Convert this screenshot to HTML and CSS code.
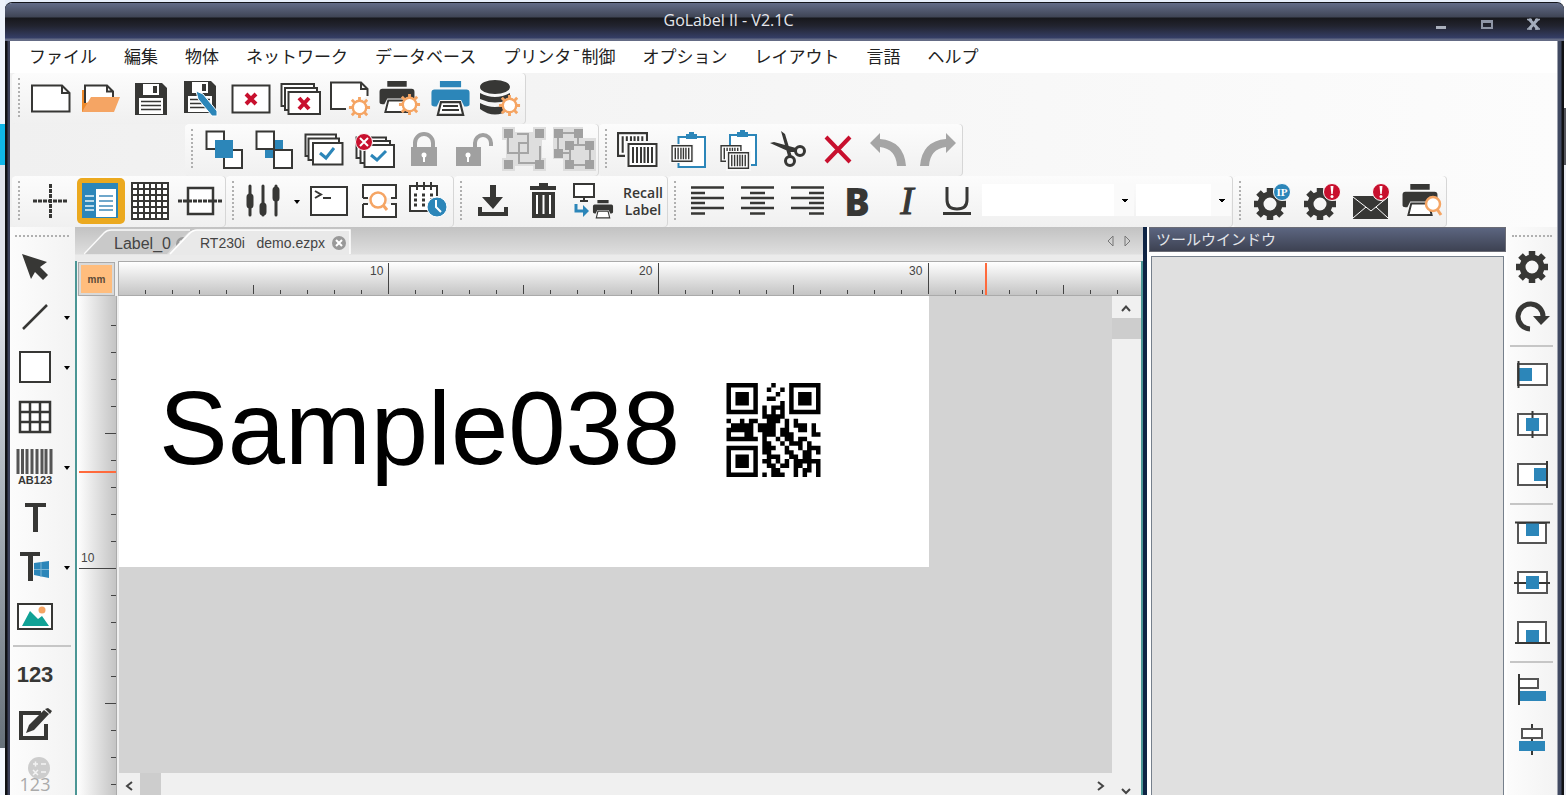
FILE: index.html
```html
<!DOCTYPE html>
<html lang="ja">
<head>
<meta charset="utf-8">
<title>GoLabel II - V2.1C</title>
<link rel="stylesheet" href="styles.css">
</head>
<body>
<svg class="defs" aria-hidden="true">
  <defs>
    <symbol id="cog" viewBox="-18 -18 36 36">
      <circle r="9.5" fill="none" stroke="currentColor" stroke-width="6"/>
      <g stroke="currentColor" stroke-width="6.5">
        <path d="M0-10V-16M0 10V16M-10 0H-16M10 0H16M-7-7L-11.5-11.5M7 7L11.5 11.5M-7 7L-11.5 11.5M7-7L11.5-11.5"/>
      </g>
    </symbol>
    <symbol id="sun" viewBox="-12 -12 24 24">
      <circle r="7" fill="#fff" stroke="#f5a564" stroke-width="2.5"/>
      <path d="M0-7V-11M0 7V11M-7 0H-11M7 0H11M-5-5L-8-8M5 5L8 8M-5 5L-8 8M5-5L8-8" stroke="#f5a564" stroke-width="3"/>
    </symbol>
    <symbol id="floppy" viewBox="0 0 32 32">
      <path d="M0 0H27L32 5V32H0z" fill="#373735"/>
      <path d="M8 1H24V12H8z" fill="#fff"/><path d="M18 3H22V10H18z" fill="#373735"/>
      <path d="M4 15H28V31H4z" fill="#fff"/><path d="M6 18.5H26M6 22.5H26M6 26.5H26" stroke="#373735" stroke-width="1.5"/>
    </symbol>
    <symbol id="printer" viewBox="0 0 36 34">
      <path d="M8 0H28V6H8zM3 8H33Q36 8 36 11V22Q36 24 33 24H31L28 18H8L5 24H3Q0 24 0 22V11Q0 8 3 8z" fill="currentColor"/>
      <path d="M9 20H27L30 32H6z" fill="#fff" stroke="#373735" stroke-width="2"/>
    </symbol>
    <symbol id="bars" viewBox="0 0 30 24">
      <path d="M1 1H29V23H1z" fill="#fff" stroke="#373735" stroke-width="2"/>
      <path d="M5.5 4V20M9.500 4V20M13.500 4V20M17 4V20M20.500 4V20M24.500 4V20" stroke="#373735" stroke-width="2"/>
    </symbol>
    <symbol id="alert" viewBox="0 0 18 18">
      <circle cx="9" cy="9" r="8.500" fill="#c8102e" stroke="#fff"/>
      <path d="M7.500 3H10.500L9.700 11H8.300z" fill="#fff"/><circle cx="9" cy="13.500" r="1.500" fill="#fff"/>
    </symbol>
  </defs>
</svg>

<main class="window">
  <header class="titlebar">
    <h1 class="title">GoLabel II - V2.1C</h1>
    <div class="controls">
      <button class="control" aria-label="最小化"><svg width="46" height="38"><path d="M18 23H28V26H18z" fill="#aab0bc"/></svg></button>
      <button class="control" aria-label="最大化"><svg width="46" height="38"><path d="M18 18H28V25H18z" fill="none" stroke="#8f96a6" stroke-width="2"/><path d="M18 18H28V20H18z" fill="#8f96a6"/></svg></button>
      <button class="control" aria-label="閉じる"><svg width="46" height="38"><path d="M19 16L28 26M28 16L19 26" stroke="#a4adbc" stroke-width="3"/><path d="M17 16.500H22M25 16.500H30M17 26H22M25 26H30" stroke="#a4adbc" stroke-width="1.500"/></svg></button>
    </div>
  </header>

  <nav class="menu">
    <button>ファイル</button><button>編集</button><button>物体</button><button>ネットワーク</button><button>データベース</button><button>プリンタ¯制御</button><button>オプション</button><button>レイアウト</button><button>言語</button><button>ヘルプ</button>
  </nav>

  <div class="bars">
    <div class="bar-row">
      <div class="bar">
        <button class="tool" aria-label="新規"><svg><path class="pg" d="M6 12.500H36L43.500 20V38.500H6zM36 12.500V20H43.500"/></svg></button>
        <button class="tool" aria-label="開く"><svg><path d="M6 17H12V39H6z" fill="#ee8a2c"/><path class="pg" d="M9 30V12.500H31L37 18.500V26M31 12.500V18.500H37"/><path d="M15 24H44L38 39H6z" fill="#f5a564"/></svg></button>
        <button class="tool" aria-label="保存"><svg><use href="#floppy" x="9" y="10" width="32" height="32"/></svg></button>
        <button class="tool" aria-label="名前を付けて保存"><svg><use href="#floppy" x="8" y="8" width="32" height="32"/><path d="M20 18L27 21L41 38V43H36L22 26z" fill="#2c86b9" stroke="#fff"/></svg></button>
        <button class="tool" aria-label="閉じる"><svg><path class="pg" d="M6.500 12.500H43.500V39.500H6.500z"/><path class="red" d="M20 21L30 31M30 21L20 31"/></svg></button>
        <button class="tool" aria-label="すべて閉じる"><svg><path class="pg" d="M5.500 11H38V33H5.500z"/><path class="pg" d="M9 15H41V37H9z"/><path class="pg" d="M12.500 19H44V41H12.500z"/><path class="red" d="M23 25L33 36M33 25L23 36"/></svg></button>
        <button class="tool" aria-label="ラベル設定"><svg><path class="pg" d="M20 36H5V9.500H35L41.500 16V23M35 9.500V16H41.500"/><use href="#sun" x="22" y="23" width="23" height="23"/></svg></button>
        <button class="tool" aria-label="印刷設定"><svg color="#373735"><use href="#printer" x="3" y="8" width="36" height="33"/><use href="#sun" x="22" y="20" width="23" height="23"/></svg></button>
        <button class="tool" aria-label="印刷"><svg color="#2c86b9"><use href="#printer" x="5" y="8" width="39" height="36"/><path class="ln" d="M17 33H32M16 37H33"/></svg></button>
        <button class="tool" aria-label="データベース設定"><svg><ellipse cx="19" cy="14" rx="15" ry="7" fill="#373735"/><path d="M4 20Q19 28 34 20V26Q19 33 4 26zM4 30Q19 38 34 30V36Q19 47 4 36z" fill="#373735"/><use href="#sun" x="22" y="21" width="23" height="23"/></svg></button>
      </div>
    </div>

    <div class="bar-row second">
      <div class="bar">
        <button class="tool" aria-label="前面へ"><svg><path class="pg" d="M7.500 6.500H25V24H7.500zM25 25H43V43H25z"/><path class="blue" d="M16 15H34V33H16z"/></svg></button>
        <button class="tool" aria-label="背面へ"><svg><path class="blue" d="M16 15H34V33H16z"/><path class="pg" d="M7.500 6.500H25V24H7.500zM25 25H43V43H25z"/></svg></button>
        <button class="tool" aria-label="すべて選択"><svg><path class="pg" d="M6.500 9.500H37V31H6.500z"/><path class="pg" d="M9.500 13.500H40V35H9.500z"/><path class="pg" d="M14 18H43.500V39.500H14z"/><path class="tick" d="M21 28L27 33L35 23"/></svg></button>
        <button class="tool" aria-label="選択解除"><svg><path class="pg" d="M7.500 12.500H37V33H7.500z"/><path class="pg" d="M11.500 16H41V38H11.500z"/><path class="pg" d="M15.500 20H45V42H15.500z"/><path class="tick" d="M22 30L28 35L37 26"/><circle cx="15" cy="17" r="8.500" fill="#c8102e" stroke="#fff"/><path d="M11 13L19 21M19 13L11 21" stroke="#fff" stroke-width="2"/></svg></button>
        <button class="tool" aria-label="ロック"><svg><path d="M16 24V18A9 9 0 0 1 34 18V24" fill="none" stroke="#a0a0a0" stroke-width="4"/><path d="M12 22H38V41H12z" fill="#a0a0a0"/><path d="M25 28V37" stroke="#fff" stroke-width="2"/><circle cx="25" cy="30" r="2.500" fill="#fff"/></svg></button>
        <button class="tool" aria-label="ロック解除"><svg><path d="M26 24V18A8 8 0 0 1 42 18V21" fill="none" stroke="#a0a0a0" stroke-width="4"/><path d="M7 22H32V41H7z" fill="#a0a0a0"/><path d="M19 28V37" stroke="#fff" stroke-width="2"/><circle cx="19" cy="30" r="2.500" fill="#fff"/></svg></button>
        <button class="tool" aria-label="グループ化"><svg><path d="M3 2H16V7H34V2H47V15H43V33H47V46H34V41H16V46H3V33H7V15H3z" fill="#dedede"/><path class="gl" d="M9 9V28H29V18H20V38H41V21M18 9H29V28"/><path class="gb" d="M5 4H14V13H5zM36 4H45V13H36zM5 35H14V44H5zM36 35H45V44H36z"/></svg></button>
        <button class="tool" aria-label="グループ解除"><svg><path d="M4 2H34V13H47V46H14V34H4z" fill="#dedede"/><path class="gl" d="M9 8H29V20M9 8V28H20M21 20H41V40H21z"/><path class="gb" d="M5 4H14V13H5zM25 4H34V13H25zM5 24H14V33H5zM16 16H25V25H16zM36 16H45V25H36zM16 35H25V44H16zM36 35H45V44H36z"/></svg></button>
      </div>
      <div class="bar">
        <button class="tool" aria-label="複製"><svg><use href="#bars" x="4" y="7" width="31" height="25"/><path d="M12 16H46V42H12z" fill="#f8f8f8"/><use href="#bars" x="14" y="18" width="31" height="24"/></svg></button>
        <button class="tool" aria-label="コピー"><svg><path d="M15.500 12H42V42H15.500z" fill="#fff" stroke="#2c86b9" stroke-width="2"/><path class="blue" d="M23 9H26V7H31V9H34V14H23z"/><path d="M6 19H31V38H6z" fill="#f8f8f8"/><use href="#bars" x="8" y="20" width="22" height="17"/></svg></button>
        <button class="tool" aria-label="貼り付け"><svg><path d="M17 10H43V40H17z" fill="#fff" stroke="#2c86b9" stroke-width="2"/><path class="blue" d="M24 7H27V5H32V7H35V12H24z"/><use href="#bars" x="7" y="20" width="22" height="17"/><path d="M13 26H38V46H13z" fill="#f8f8f8"/><use href="#bars" x="14" y="27" width="23" height="17"/></svg></button>
        <button class="tool" aria-label="切り取り"><svg><path d="M18 6L22 9L29 32L25 31zM7 18L11 17L33 23L33 27L27 27z" fill="#373735"/><circle cx="37" cy="26" r="4.500" fill="none" stroke="#373735" stroke-width="3"/><circle cx="27" cy="36" r="4.500" fill="none" stroke="#373735" stroke-width="3"/></svg></button>
        <button class="tool" aria-label="削除"><svg><path class="red" d="M13 12L37 37M37 12L13 37"/></svg></button>
        <button class="tool" aria-label="元に戻す"><svg><path d="M7 18L17 8V14Q41 16 43 41H34Q33 24 17 22V28z" fill="#a5a5a5"/></svg></button>
        <button class="tool" aria-label="やり直し"><svg><path d="M43 18L33 8V14Q9 16 7 41H16Q17 24 33 22V28z" fill="#a5a5a5"/></svg></button>
      </div>
    </div>

    <div class="bar-row">
      <div class="bar">
        <button class="tool" aria-label="十字線"><svg><path d="M7 25H42M24.500 8V43" fill="none" stroke="#373735" stroke-width="3" stroke-dasharray="4 1"/></svg></button>
        <button class="tool on" aria-label="プロパティ"><svg><path class="blue" d="M6 7H42V42H6z"/><path d="M20 13H40V41H20z" fill="#fff"/><path d="M9 20H18M9 25H18M9 30H18M9 34H18" stroke="#b9d8e8" stroke-width="2"/><path d="M23 20H37M23 25H37M23 30H37M23 34H37" stroke="#6fa7cb" stroke-width="2"/></svg></button>
        <button class="tool" aria-label="グリッド"><svg><path d="M6 7H42V43H6zM12 7V43M18 7V43M24 7V43M30 7V43M36 7V43M6 13H42M6 19H42M6 25H42M6 31H42M6 37H42" fill="#fff" stroke="#373735" stroke-width="2"/></svg></button>
        <button class="tool" aria-label="中央線"><svg><path d="M12 12H37V38H12z" fill="#fff" stroke="#373735" stroke-width="2.500"/><path d="M2 25H47" stroke="#373735" stroke-width="3" stroke-dasharray="4 1"/></svg></button>
      </div>
      <div class="bar">
        <button class="tool drop" aria-label="調整"><svg><path d="M10 10V39M23 10V39M36 10V39" stroke="#373735" stroke-width="3" stroke-linecap="round"/><path d="M10 21V29M23 30V36M36 14V22" stroke="#373735" stroke-width="7" stroke-linecap="round"/></svg></button>
        <button class="tool" aria-label="コマンド"><svg><path class="pg" d="M7 11H43V39H7z"/><path d="M11 15L17 18.500L11 22M19 22H27" fill="none" stroke="#373735" stroke-width="2"/></svg></button>
        <button class="tool" aria-label="プレビュー"><svg><path class="pg" d="M9 22V9H42V22H37M9 22H14M9 28V41H42V28H37M9 28H14"/><circle cx="24" cy="24" r="7.500" fill="#fff" stroke="#f5a564" stroke-width="2.500"/><path d="M29 29L33 34" stroke="#f5a564" stroke-width="3"/></svg></button>
        <button class="tool" aria-label="予定"><svg><path class="pg" d="M33 20V10H6V35H24M13 6V14M20 6V14M27 6V14"/><path d="M10 19H29M10 24H29M10 29H23" stroke="#373735" stroke-width="3" stroke-dasharray="3 5"/><circle cx="33" cy="31" r="10" fill="#2c86b9" stroke="#fff"/><path d="M32 24V31L37 36" fill="none" stroke="#fff" stroke-width="2"/></svg></button>
      </div>
      <div class="bar">
        <button class="tool" aria-label="ダウンロード"><svg><path d="M22 9H28V21H35L25 33L14 21H22zM10 31H14V36H36V31H40V40H10z" fill="#373735"/></svg></button>
        <button class="tool" aria-label="ごみ箱"><svg><path d="M12 10H21V7H30V10H38V14H12zM14 16H37V42H14z" fill="#373735"/><path d="M19 19V38M25.500 19V38M32 19V38" stroke="#fff" stroke-width="2"/></svg></button>
        <button class="tool" aria-label="転送印刷"><svg color="#373735"><path class="pg" d="M6 8H26V21H6zM16 21V24M12 25H20"/><path d="M8 28V35H17" fill="none" stroke="#2c86b9" stroke-width="3"/><path class="blue" d="M15 29L21 35L15 41z"/><use href="#printer" x="23" y="24" width="24" height="19"/></svg></button>
        <button class="tool recall">Recall<br>Label</button>
      </div>
      <div class="bar">
        <button class="tool" aria-label="左揃え"><svg><path class="al" d="M9 11.500H42M9 17H23M9 22H42M9 27H23M9 32H42M9 37.500H23"/></svg></button>
        <button class="tool" aria-label="中央揃え"><svg><path class="al" d="M9 11.500H42M18 17H33M9 22H42M18 27H33M9 32H42M18 37.500H33"/></svg></button>
        <button class="tool" aria-label="右揃え"><svg><path class="al" d="M9 11.500H42M27 17H42M9 22H42M27 27H42M9 32H42M27 37.500H42"/></svg></button>
        <button class="tool bold">B</button>
        <button class="tool italic">I</button>
        <button class="tool" aria-label="下線"><svg><path d="M15 11V24Q15 33 25 33T35 24V11M11 37.500H39" fill="none" stroke="#373735" stroke-width="3"/></svg></button>
        <select class="combo wide" aria-label="フォント"><option></option></select>
        <select class="combo" aria-label="サイズ"><option></option></select>
      </div>
      <div class="bar">
        <button class="tool" aria-label="IP設定"><svg color="#373735"><use href="#cog" x="5" y="10" width="36" height="36"/><circle cx="35" cy="16" r="8.500" fill="#2c86b9" stroke="#fff"/><text x="35" y="20" class="ip">IP</text></svg></button>
        <button class="tool" aria-label="警告設定"><svg color="#373735"><use href="#cog" x="5" y="10" width="36" height="36"/><use href="#alert" x="26" y="7" width="18" height="18"/></svg></button>
        <button class="tool" aria-label="メール警告"><svg><path d="M6 20H41V43H6z" fill="#373735"/><path d="M6 21L24 35L41 21M6 42L19 31M41 42L29 31" fill="none" stroke="#fff"/><use href="#alert" x="25" y="7" width="18" height="18"/></svg></button>
        <button class="tool" aria-label="印刷確認"><svg color="#373735"><use href="#printer" x="5" y="8" width="36" height="33"/><circle cx="36" cy="28" r="7" fill="#fff" stroke="#f5a564" stroke-width="2.500"/><path d="M40 33L44 39" stroke="#f5a564" stroke-width="3"/></svg></button>
      </div>
    </div>
  </div>

  <div class="work">
    <aside class="side">
      <button class="tool" aria-label="選択"><svg><path d="M12 12L37 20L30 25L38 33L33 38L25 30L21 37z" fill="#373735"/></svg></button>
      <button class="tool drop" aria-label="線"><svg><path d="M13 37L37 13" stroke="#373735" stroke-width="2.500"/></svg></button>
      <button class="tool drop" aria-label="四角形"><svg><path d="M10 10H40V40H10z" fill="#fff" stroke="#373735" stroke-width="2"/></svg></button>
      <button class="tool" aria-label="表"><svg><path d="M10 10H40V40H10zM20 10V40M30 10V40M10 20H40M10 30H40" fill="#fff" stroke="#373735" stroke-width="2.500"/></svg></button>
      <button class="tool drop" aria-label="バーコード"><svg><path d="M8 7V32M12.500 7V32M17 7V32M22 7V32M27 7V32M32 7V32M36 7V32M41 7V32" stroke="#555" stroke-width="3"/><text x="25" y="42" class="ab">AB123</text></svg></button>
      <button class="tool" aria-label="テキスト"><svg><path d="M15 11H36V15H28V40H23V15H15z" fill="#373735"/></svg></button>
      <button class="tool drop" aria-label="Windowsテキスト"><svg><path d="M10 10H30V14H23V39H18V14H10z" fill="#373735"/><path d="M24 21L39 19V36L24 33z" fill="#2c86b9"/><path d="M31 20V35M24 27.500H39" stroke="#7db5d4"/></svg></button>
      <button class="tool" aria-label="画像"><svg><path d="M8 12H42V37H8z" fill="#fff" stroke="#373735" stroke-width="2"/><path d="M12 34L20 19L28 27L32 24L39 34z" fill="#11a296"/><circle cx="32" cy="18" r="3.500" fill="#f5a564"/></svg></button>
      <hr>
      <button class="tool count">123</button>
      <button class="tool" aria-label="編集"><svg><path d="M31 13H11V38H36V24" fill="none" stroke="#373735" stroke-width="4"/><path d="M16 33L19 25L34 10L39 14L24 30z" fill="#373735"/><path d="M35 9L38 8L42 11L40 14z" fill="#373735"/></svg></button>
      <button class="tool" aria-label="計算"><svg><circle cx="29" cy="18" r="11" fill="#cdcdcd"/><path d="M23 14H28M25.500 11.500V16.500M31 14H36M23 20L28 25M28 20L23 25M31 22H36" stroke="#f3f3f3" stroke-width="1.500"/><text x="25" y="41" class="calc">123</text></svg></button>
    </aside>

    <section class="document">
      <div class="tabs">
        <svg class="tab-shapes" width="276" height="35" aria-hidden="true"><path d="M8 27L28 6Q31 3 36 3H112L92 27z" fill="#c9c9c9"/><path d="M9 27L29 6Q32 3 36 3H115" fill="none" stroke="#fafafa" stroke-width="1.500"/></svg>
        <button class="tab first">Label_0<svg width="16" height="16" viewBox="0 0 16 16"><circle cx="8" cy="8" r="7" fill="#999"/><path d="M5 5L11 11M11 5L5 11" stroke="#fff" stroke-width="2"/></svg></button>
        <svg class="tab-shapes" width="276" height="35" aria-hidden="true"><path d="M93 28L112 7Q116 3 121 3H275V28z" fill="#e9e9e9"/><path d="M95 27L114 7Q118 3 122 3H275V27" fill="none" stroke="#fff" stroke-width="1.500"/></svg>
        <button class="tab">RT230i&nbsp;&nbsp; demo.ezpx<svg width="16" height="16" viewBox="0 0 16 16"><circle cx="8" cy="8" r="7" fill="#999"/><path d="M5 5L11 11M11 5L5 11" stroke="#fff" stroke-width="2"/></svg></button>
        <svg class="tab-nav" width="32" height="16" aria-hidden="true"><path d="M8 3V13L3 8zM20 3V13L25 8z" fill="none" stroke="#777"/></svg>
      </div>
      <div class="editor">
        <button class="unit">mm</button>
        <div class="ruler top">
          <svg width="100%" height="33">
            <defs>
              <pattern id="mmx" x="-1" width="27" height="33" patternUnits="userSpaceOnUse"><path d="M.5 28V32" stroke="#444"/></pattern>
              <pattern id="fivex" x="134" width="270" height="33" patternUnits="userSpaceOnUse"><path d="M.5 23V32" stroke="#444"/></pattern>
              <pattern id="tenx" x="-1" width="270" height="33" patternUnits="userSpaceOnUse"><path d="M.5 1V32" stroke="#444"/></pattern>
            </defs>
            <rect x="10" width="100%" height="33" fill="url(#mmx)"/>
            <rect x="10" width="100%" height="33" fill="url(#fivex)"/>
            <rect x="10" width="100%" height="33" fill="url(#tenx)"/>
            <rect x="866" y="1" width="2" height="32" fill="#ff6a3c"/>
            <text x="251" y="13">10</text><text x="520" y="13">20</text><text x="790" y="13">30</text>
          </svg>
        </div>
        <div class="ruler left">
          <svg width="40" height="100%">
            <defs>
              <pattern id="mmy" y="2" width="40" height="27" patternUnits="userSpaceOnUse"><path d="M34 .5H39" stroke="#444"/></pattern>
              <pattern id="fivey" y="137" width="40" height="270" patternUnits="userSpaceOnUse"><path d="M28 .5H39" stroke="#444"/></pattern>
              <pattern id="teny" y="2" width="40" height="270" patternUnits="userSpaceOnUse"><path d="M2 .5H39" stroke="#444"/></pattern>
            </defs>
            <rect y="10" width="40" height="100%" fill="url(#mmy)"/>
            <rect y="10" width="40" height="100%" fill="url(#fivey)"/>
            <rect y="10" width="40" height="100%" fill="url(#teny)"/>
            <rect x="2" y="175" width="38" height="2" fill="#ff6a3c"/>
            <text x="4" y="266">10</text>
          </svg>
        </div>
        <div class="canvas">
          <div class="label">
            <span class="sample">Sample038</span>
            <svg class="qr" viewBox="0 0 21 21" role="img" aria-label="QRコード"><path id="qr"/></svg>
          </div>
        </div>
        <div class="scroll vertical">
          <svg width="28" height="22"><path d="M10 15L14 10.500L18 15" fill="none" stroke="#444" stroke-width="2"/></svg>
          <div class="thumb"></div>
          <svg class="end" width="28" height="22"><path d="M10 16L14 20L18 16" fill="none" stroke="#444" stroke-width="2"/></svg>
        </div>
        <div class="scroll horizontal">
          <svg width="21" height="22"><path d="M13 9L8 13L13 17" fill="none" stroke="#444" stroke-width="2"/></svg>
          <div class="thumb"></div>
          <svg class="end" width="21" height="22"><path d="M7 9L12 13L7 17" fill="none" stroke="#444" stroke-width="2"/></svg>
        </div>
      </div>
    </section>

    <section class="tool-window">
      <h2>ツールウインドウ</h2>
      <div class="tool-body"></div>
    </section>

    <aside class="side right">
      <button class="tool" aria-label="設定"><svg color="#373735"><use href="#cog" x="7" y="7" width="36" height="36"/></svg></button>
      <button class="tool" aria-label="回転"><svg><path d="M23 37A12.500 12.500 0 1 1 36 25" fill="none" stroke="#373735" stroke-width="5"/><path d="M26 24H43L34 33z" fill="#373735"/></svg></button>
      <hr>
      <button class="tool" aria-label="左に整列"><svg><path class="fr" d="M11 14H40V35H11z"/><path class="blue" d="M12 18H25V31H12z"/><path class="ln" d="M11.500 11V38"/></svg></button>
      <button class="tool" aria-label="左右中央に整列"><svg><path class="fr" d="M11 14H40V35H11z"/><path class="ln" d="M25.500 11V38"/><path class="blue" d="M19 18H32V31H19z"/></svg></button>
      <button class="tool" aria-label="右に整列"><svg><path class="fr" d="M11 14H40V35H11z"/><path class="blue" d="M27 18H39V31H27z"/><path class="ln" d="M40 11V38"/></svg></button>
      <hr>
      <button class="tool" aria-label="上に整列"><svg><path class="fr" d="M11 15H39V35H11z"/><path class="blue" d="M19 15H32V28H19z"/><path class="ln" d="M8 14.500H43"/></svg></button>
      <button class="tool" aria-label="上下中央に整列"><svg><path class="fr" d="M11 14H40V35H11z"/><path class="ln" d="M7 25H43"/><path class="blue" d="M19 18H32V31H19z"/></svg></button>
      <button class="tool" aria-label="下に整列"><svg><path class="fr" d="M11 14H39V35H11z"/><path class="blue" d="M19 22H32V35H19z"/><path class="ln" d="M8 35H43"/></svg></button>
      <hr>
      <button class="tool" aria-label="左端を揃える"><svg><path class="fr" d="M12 13H31V22H12z"/><path class="blue" d="M13 25H39V35H13z"/><path class="ln" d="M12 8V39"/></svg></button>
      <button class="tool" aria-label="中心を揃える"><svg><path class="ln" d="M25 8V39"/><path class="fr" d="M15 13H35V22H15z"/><path class="blue" d="M12 25H38V35H12z"/></svg></button>
    </aside>
  </div>
</main>
<script src="qr.js"></script>
</body>
</html>
```
FILE: qr.js
```js
const rows = [
  "#######...#...#######",
  "#.....#..#..#.#.....#",
  "#.###.#....#..#.###.#",
  "#.###.#..##...#.###.#",
  "#.###.#.....#.#.###.#",
  "#.....#.#.###.#.....#",
  "#######.#.#.#.#######",
  "........#####........",
  "#..#.##..###.#.#.....",
  ".#####.####..#.###.#.",
  "######.####.##..##.#.",
  "#...##..###.###....##",
  "#######.#..#.##.##...",
  "........##..#.###.#..",
  "#######.###..#..#.###",
  "#.....#.##...##..##.#",
  "#.###.#..###..##.##..",
  "#.###.#.##.#.#.######",
  "#.###.#..##.##.##.#.#",
  "#.....#...##...#.##.#",
  "#######.#.###..#.#..#"
];
let d = "";
rows.forEach((row, y) => {
  [...row].forEach((cell, x) => {
    if (cell === "#") d += `M${x} ${y}h1v1h-1z`;
  });
});
document.getElementById("qr").setAttribute("d", d);
```
FILE: styles.css
```css
* { box-sizing: border-box; }

body {
  margin: 0;
  height: 100vh;
  padding: 2px 2px 0 5px;
  overflow: hidden;
  font-family: "Liberation Sans", "Noto Sans CJK JP", sans-serif;
  color: #373735;
  background:
    linear-gradient(#eef3fb 0 124px, #10b6e8 124px 165px, #dfe2ea 165px 300px, #aab2bb 500px, #67717a 748px, #f4f8ff 748px) left / 5px 100% no-repeat,
    linear-gradient(#fff 0 108px, #55575e 108px 165px, #e8ebf2 165px) right / 5px 100% no-repeat,
    #e6eefa;
}

button {
  border: 0;
  padding: 0;
  margin: 0;
  background: none;
  color: inherit;
  font: inherit;
}

svg { display: block; overflow: visible; }
.defs { position: absolute; width: 0; height: 0; }

.window {
  height: 100%;
  display: flex;
  flex-direction: column;
  border-top: 1px solid #14161c;
  border-radius: 7px 7px 0 0;
  overflow: hidden;
  background: linear-gradient(90deg, #101114 0 2px, #3b4059 3px 5px, #f8f8f8 5px calc(100% - 7px), #404961 calc(100% - 6px) calc(100% - 3px), #101114 calc(100% - 2px));
}

.titlebar {
  display: flex;
  height: 38px;
  flex: none;
  background: linear-gradient(#626c88, #3f4555 14px, #17181c 15px, #22242f 23px, #353e66 35px, #646b85 36px);
}
.title {
  flex: 1;
  margin: 0;
  padding-left: 34px;
  text-align: center;
  font: 16px/34px "Open Sans", sans-serif;
  color: #e4e6ec;
}
.controls { display: flex; padding-right: 8px; }
.control { width: 46px; }

.menu {
  display: flex;
  flex: none;
  gap: 27px;
  height: 32px;
  margin: 0 7px 0 5px;
  padding-left: 19px;
  background: #fff;
  font: 17px/30px "Noto Sans CJK JP", sans-serif;
  color: #222;
}
.menu button { white-space: nowrap; line-height: 30px; align-self: flex-start; }

.bars {
  flex: none;
  margin: 0 7px 0 5px;
  background: linear-gradient(90deg, #f0f0f0, #fcfcfc);
}
.bar-row { display: flex; height: 51px; padding-left: 2px; }
.bar-row.second { height: 52px; padding-left: 175px; }
.second .bar { padding-top: 1px; }
.bar {
  position: relative;
  display: flex;
  align-items: flex-start;
  padding-left: 14px;
  background: linear-gradient(#fcfcfc, #f0f0f0);
  border-radius: 4px;
  box-shadow: inset -1px 0 #d6d6d6;
}
.bar::before {
  content: "";
  position: absolute;
  left: 6px;
  top: 5px;
  height: 39px;
  border-left: 2px dotted #b0b0b0;
}

.tool { position: relative; width: 50px; height: 50px; flex: none; }
.tool svg { width: 50px; height: 50px; }
.tool.on::before {
  content: "";
  position: absolute;
  inset: 2px 1px;
  border-radius: 5px;
  background: #eba91f;
}
.tool.on svg { position: relative; }
.bar .drop { width: 64px; }
.drop::after {
  content: "";
  position: absolute;
  top: 24px;
  right: 2px;
  border: 3px solid transparent;
  border-top: 4px solid #000;
  border-bottom: 0;
}
.bar .drop::after { right: 4px; }
.recall { font: 600 14px/17px "Open Sans", sans-serif; }
.bold { font: 800 38px/44px "Open Sans", sans-serif; }
.italic { font: italic 40px/48px "Liberation Serif", serif; -webkit-text-stroke: 1px #373735; }
.count { font-size: 22px; font-weight: 700; }

.pg { fill: #fff; stroke: #373735; stroke-width: 2; }
.red { fill: none; stroke: #c8102e; stroke-width: 4; }
.blue { fill: #2c86b9; }
.tick { fill: none; stroke: #2c86b9; stroke-width: 3; }
.gl { fill: none; stroke: #a5a5a5; stroke-width: 2; }
.gb { fill: #a0a0a0; }
.al { fill: none; stroke: #373735; stroke-width: 2.5; }
.ln { fill: none; stroke: #373735; stroke-width: 2; }
.fr { fill: #fff; stroke: #555; stroke-width: 2; }
.ip { font: 700 11px "Liberation Serif", serif; fill: #fff; text-anchor: middle; }
.ab { font: 700 11px "Liberation Sans", sans-serif; fill: #373735; text-anchor: middle; }
.calc { font: 18px "Open Sans", sans-serif; fill: #aaa; text-anchor: middle; }

.combo {
  width: 95px;
  height: 32px;
  margin: 8px 2px 0 0;
  border: 0;
  border-radius: 0;
  appearance: none;
  background:
    linear-gradient(#000, #000) right 6px top 15px / 6px 1px no-repeat,
    linear-gradient(#000, #000) right 7px top 16px / 4px 1px no-repeat,
    linear-gradient(#000, #000) right 8px top 17px / 2px 1px no-repeat,
    linear-gradient(90deg, #fff calc(100% - 20px), #fafafa 0);
}
.combo.wide { width: 152px; }

.work { display: flex; flex: 1; min-height: 0; margin: 0 7px 0 5px; }
.side {
  position: relative;
  flex: none;
  width: 65px;
  padding-top: 15px;
  overflow: hidden;
  background: linear-gradient(90deg, #fcfcfc, #f3f3f3);
}
.side::before {
  content: "";
  position: absolute;
  left: 5px;
  top: 8px;
  width: 54px;
  border-top: 2px dotted #b0b0b0;
}
.side .tool { display: block; text-align: center; }
.side .drop { width: 62px; }
.side hr { height: 2px; margin: 3px 4px 3px 3px; border: 0; background: #c6c6c6; }
.side.right { width: 50px; }
.side.right::before { width: 40px; }

.document {
  flex: 3;
  display: flex;
  flex-direction: column;
  min-width: 0;
  border-right: 4px solid #0f2444;
}
.tabs {
  position: relative;
  display: flex;
  flex: none;
  height: 34px;
  padding-left: 39px;
  background: linear-gradient(#c2c2c2, #dedede 27px, #ebebeb 28px);
  color: #444;
}
.tab-shapes { position: absolute; left: 0; top: 0; }
.tab {
  position: relative;
  display: flex;
  align-items: center;
  gap: 6px;
  height: 32px;
  font-size: 14px;
  white-space: nowrap;
}
.tab.first { gap: 4px; width: 86px; height: 34px; font-size: 16px; }
.tab.first svg { flex: none; }
.tab-nav { margin: 6px 6px 0 auto; }

.editor {
  flex: 1;
  min-height: 0;
  display: grid;
  grid-template: 35px 1fr 22px / 42px minmax(0, 1fr) 29px;
  border-left: 2px solid #4b9695;
  border-right: 2px solid #4b9695;
  background: #efefef;
}
.unit {
  margin: 1px 4px 0 1px;
  border: 3px solid #d9d9d9;
  outline: 1px solid #aaa;
  outline-offset: -1px;
  background: #ffbd7d;
  color: #5d4a37;
  font-size: 10px;
  font-weight: 700;
}
.ruler { overflow: hidden; font-size: 12px; }
.ruler.top {
  grid-column: 2 / 4;
  margin-left: -1px;
  height: 35px;
  border: 1px solid #aaa;
  border-right: 0;
  background: linear-gradient(#fff, #c4c4c4);
}
.ruler.left {
  grid-row: 2 / 4;
  width: 40px;
  border-right: 1px solid #aaa;
  background: linear-gradient(90deg, #fff, #c4c4c4);
}
.ruler text { fill: #444; }
.canvas { background: #d3d3d3; overflow: hidden; min-width: 0; }
.label { position: relative; width: 810px; height: 271px; background: #fff; }
.sample {
  position: absolute;
  left: 40px;
  top: 73px;
  font-size: 103px;
  line-height: 120px;
  color: #000;
}
.qr { position: absolute; left: 607px; top: 87px; width: 95px; height: 94px; }

.scroll { display: flex; background: #f0f0f0; }
.scroll.vertical { grid-area: 2 / 3 / 4; flex-direction: column; }
.scroll.horizontal { grid-area: 3 / 2; }
.thumb { background: #cdcdcd; flex: 0 0 21px; }
.scroll.vertical .end { margin-top: auto; }
.scroll.horizontal .end { margin-left: auto; }

.tool-window {
  flex: 1;
  display: flex;
  flex-direction: column;
  min-width: 0;
  padding: 0 2px;
  background: #fff;
}
.tool-window h2 {
  margin: 0 -1px 4px 0;
  height: 25px;
  padding-left: 6px;
  border: 1px solid #6b6c75;
  background: linear-gradient(#5c6580, #3d4252);
  color: #e3e5ea;
  font: 15px/22px "Noto Sans CJK JP", sans-serif;
}
.tool-body {
  flex: 1;
  margin: 0 1px 0 2px;
  border: 1px solid #76808c;
  border-bottom: 0;
  background: #e0e0e0;
}
```
